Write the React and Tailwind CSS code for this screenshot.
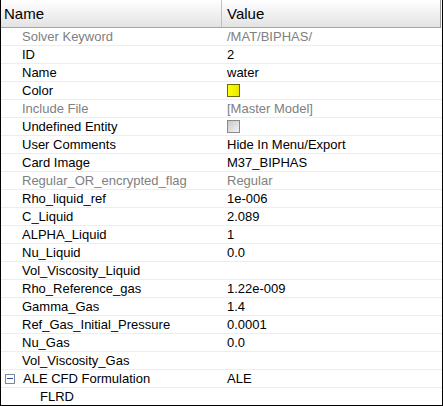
import React from "react";

const rows = [
  { n: "Solver Keyword", v: "/MAT/BIPHAS/", dim: true },
  { n: "ID", v: "2" },
  { n: "Name", v: "water" },
  { n: "Color", v: "__color" },
  { n: "Include File", v: "[Master Model]", dim: true },
  { n: "Undefined Entity", v: "__check" },
  { n: "User Comments", v: "Hide In Menu/Export" },
  { n: "Card Image", v: "M37_BIPHAS" },
  { n: "Regular_OR_encrypted_flag", v: "Regular", dim: true },
  { n: "Rho_liquid_ref", v: "1e-006" },
  { n: "C_Liquid", v: "2.089" },
  { n: "ALPHA_Liquid", v: "1" },
  { n: "Nu_Liquid", v: "0.0" },
  { n: "Vol_Viscosity_Liquid", v: "" },
  { n: "Rho_Reference_gas", v: "1.22e-009" },
  { n: "Gamma_Gas", v: "1.4" },
  { n: "Ref_Gas_Initial_Pressure", v: "0.0001" },
  { n: "Nu_Gas", v: "0.0" },
  { n: "Vol_Viscosity_Gas", v: "" },
  { n: "ALE CFD Formulation", v: "ALE", group: true },
  { n: "FLRD", v: "", child: true },
];

function Value({ v }) {
  if (v === "__color")
    return (
      <span className="inline-block w-[13px] h-[13px] border border-[#6b6b00] bg-gradient-to-r from-[#ffff00] to-[#e8e800] align-middle" />
    );
  if (v === "__check")
    return (
      <span className="inline-block w-[13px] h-[13px] border border-[#8a8a8a] bg-gradient-to-br from-[#c8c8c8] to-[#f4f4f4] align-middle" />
    );
  return v;
}

export default function App() {
  return (
    <div
      className="w-[443px] h-[406px] bg-white border-l border-b border-r border-black overflow-hidden text-[13px] text-black"
      style={{ fontFamily: '"Liberation Sans", Arial, sans-serif' }}
    >
      <div className="flex h-[28px] border-b border-[#a5a5a5] bg-gradient-to-b from-[#ffffff] to-[#e3e3e3] border-r border-r-[#9a9a9a] mr-px text-[15px]">
        <div className="w-[221px] border-r border-[#c0c0c0] pl-[3px] flex items-center pt-[2px]">Name</div>
        <div className="flex-1 pl-[5px] flex items-center pt-[2px]">Value</div>
      </div>
      {rows.map((r, i) => (
        <div
          key={i}
          className={`flex h-[18px] border-b border-[#e6eff1] items-center ${r.dim ? "text-[#808080]" : ""}`}
        >
          <div className="w-[221px] flex items-center shrink-0">
            {r.group ? (
              <span className="ml-[4px] mr-[8px] w-[10px] h-[10px] border border-[#7a8a9a] bg-white flex items-center justify-center">
                <span className="w-[6px] h-px bg-[#2a4aa0]" />
              </span>
            ) : (
              <span className={r.child ? "w-[39px]" : "w-[21px]"} />
            )}
            <span>{r.n}</span>
          </div>
          <div className="flex-1 pl-[5px] flex items-center">
            <Value v={r.v} />
          </div>
        </div>
      ))}
    </div>
  );
}
